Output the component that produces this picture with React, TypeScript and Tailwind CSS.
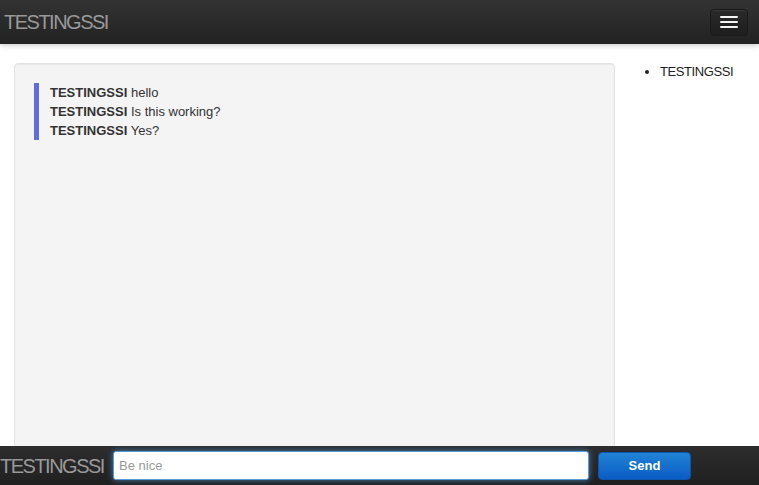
import React from 'react';

const messages = [
  { user: 'TESTINGSSI', text: 'hello' },
  { user: 'TESTINGSSI', text: 'Is this working?' },
  { user: 'TESTINGSSI', text: 'Yes?' },
];

const users = ['TESTINGSSI'];

export default function App() {
  return (
    <div className="relative h-[485px] w-[759px] overflow-hidden bg-white font-['Liberation_Sans',Arial,sans-serif] text-[#333]">
      {/* top navbar */}
      <div className="flex h-[44px] items-center justify-between bg-gradient-to-b from-[#333] to-[#222] shadow-[0_1px_6px_rgba(0,0,0,0.25)]">
        <span className="pl-[4px] text-[20px] tracking-[-1.5px] text-[#999]">TESTINGSSI</span>
        <button className="mr-[11px] flex h-[27px] w-[38px] flex-col items-center justify-center gap-[3px] rounded-[4px] border border-[#1a1a1a] bg-gradient-to-b from-[#2a2a2a] to-[#1e1e1e] shadow-[inset_0_1px_0_rgba(255,255,255,0.08)]">
          <span className="h-[2px] w-[18px] rounded-[1px] bg-[#f5f5f5]" />
          <span className="h-[2px] w-[18px] rounded-[1px] bg-[#f5f5f5]" />
          <span className="h-[2px] w-[18px] rounded-[1px] bg-[#f5f5f5]" />
        </button>
      </div>

      <div className="flex pt-[19px]">
        {/* chat well */}
        <div className="ml-[14px] h-[420px] w-[601px] rounded-[4px] border border-[#e3e3e3] bg-[#f4f4f4] p-[19px] shadow-[inset_0_1px_1px_rgba(0,0,0,0.05)]">
          <div className="border-l-[5px] border-[#626ce0] pl-[11px] text-[13px] leading-[19px]">
            {messages.map((m, i) => (
              <div key={i}>
                <span className="font-bold">{m.user}</span> {m.text}
              </div>
            ))}
          </div>
        </div>

        {/* user list */}
        <ul className="ml-[19px] list-disc pl-[26px] pt-[1px] text-[13px] leading-[16px] tracking-[-0.4px] text-[#222]">
          {users.map((u) => (
            <li key={u}>{u}</li>
          ))}
        </ul>
      </div>

      {/* bottom bar */}
      <div className="absolute bottom-0 left-0 flex h-[39px] w-full items-center bg-gradient-to-b from-[#2d2d2d] to-[#202020]">
        <span className="w-[113px] text-[20px] tracking-[-1.5px] text-[#999]">TESTINGSSI</span>
        <input
          placeholder="Be nice"
          className="h-[29px] w-[476px] rounded-[3px] border border-[#5a9ad6] bg-white px-[5px] text-[13px] text-[#555] shadow-[0_0_6px_rgba(82,168,236,0.7)] outline-none placeholder:text-[#999]"
        />
        <button className="ml-[9px] h-[28px] w-[93px] rounded-[4px] border border-[#0b54b0] bg-gradient-to-b from-[#2183d6] to-[#0b5cc3] text-[13px] font-bold text-white">
          Send
        </button>
      </div>
    </div>
  );
}
